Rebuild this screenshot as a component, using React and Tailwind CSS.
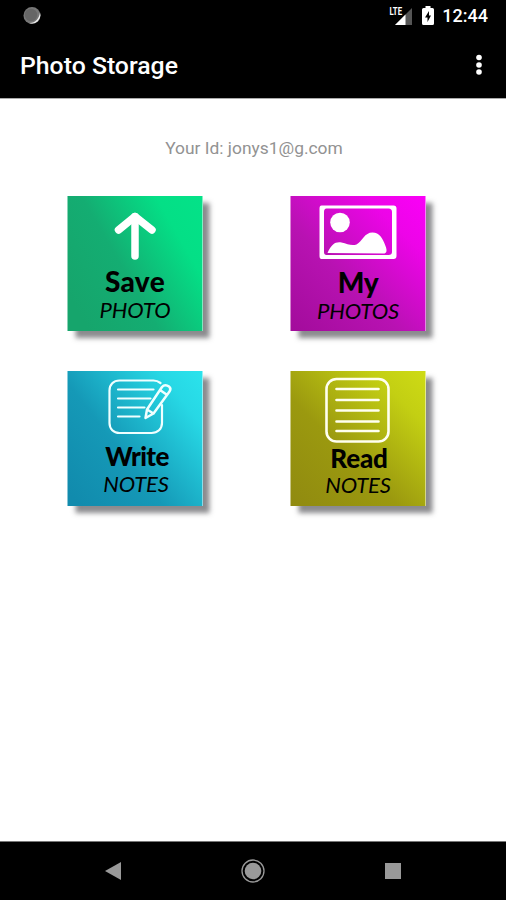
import clsx from "clsx";

function ArrowIcon() {
  return (
    <svg viewBox="0 0 135 72" className="w-full h-[72px] shrink-0" fill="none" stroke="#fff" strokeWidth="7.500" strokeLinecap="round" strokeLinejoin="round">
      <path d="M67.5 60V20.5" />
      <path d="M51 34L67.5 20.5L84.5 34" />
    </svg>
  );
}

function PictureIcon() {
  return (
    <svg viewBox="0 0 135 72" className="w-full h-[72px] shrink-0">
      <path fillRule="evenodd" d="M31 9.500H103Q106 9.500 106 12.500V60Q106 63 103 63H31Q29 63 29 60V12.500Q29 9.500 31 9.500ZM36 12.500Q33.500 12.500 33.500 16V56Q33.500 59 36 59H98Q101.500 59 101.500 56V16Q101.500 12.500 98 12.500Z" fill="#fff" />
      <circle cx="49.500" cy="26.500" r="9.800" fill="#fff" />
      <path d="M37 57C41 48 45 45.500 51 46.500C57 48 61 50 66 48.500C72 45 74 36.500 82 36.500C89 36.500 92 42 95 50C97 55 96 57.500 93 57.500Z" fill="#fff" />
    </svg>
  );
}

function WriteIcon() {
  return (
    <svg viewBox="0 0 135 72" className="w-full h-[72px] shrink-0" fill="none" stroke="#f0ffff" strokeWidth="2.200" strokeLinecap="round" strokeLinejoin="round">
      <path d="M93 12C91 10.500 88.500 9.500 86 9.500H52C46 9.500 42 13.500 42 19.500V52C42 58 46 62 52 62H84C90 62 94.500 58 94.500 52V34" />
      <path d="M50.500 18.500H86M50.500 27.500H83M50.500 36.500H77M50.500 45.500H72" />
      <path d="M78 47L79.500 38.500L94.500 16C96.500 13.500 99.500 14 101.500 15.500C103.500 17 103.300 18.500 102 20.500L86 42.500L78 47ZM79.500 38.500L86 42.500M92.500 19L99 23.500" strokeWidth="2.500" />
    </svg>
  );
}

function ReadIcon() {
  return (
    <svg viewBox="0 0 135 72" className="w-full h-[72px] shrink-0" fill="none" stroke="#fffff0" strokeWidth="2.600" strokeLinecap="round">
      <rect x="36" y="8" width="62" height="62.500" rx="10" />
      <path d="M46 18H88M46 29H88M46 39.500H88M46 50.500H88M46 60H88" />
    </svg>
  );
}

const tiles = [
  {
    icon: ArrowIcon,
    title: "Save",
    subtitle: "PHOTO",
    bg: "bg-[linear-gradient(60deg,#16a56c_10%,#14ad72_43%,#04df86_78%,#04e288_100%)]",
    titleClass: "text-[28px] tracking-[0.3px]",
    subtitleClass: "tracking-[-0.1px]",
  },
  {
    icon: PictureIcon,
    title: "My",
    subtitle: "PHOTOS",
    bg: "bg-[linear-gradient(45deg,#a20c9b_0%,#b812b2_40%,#ed04e8_78%,#fb00f8_100%)]",
    titleClass: "text-[28px] tracking-[-0.3px] translate-y-px",
    subtitleClass: "tracking-[-0.1px] translate-y-px",
  },
  {
    icon: WriteIcon,
    title: "Write",
    subtitle: "NOTES",
    bg: "bg-[linear-gradient(52deg,#118bad_5%,#1599b7_40%,#27d8e5_82%,#2be3ec_100%)]",
    titleClass: "text-[26px] tracking-[-0.6px] translate-x-0.5",
    subtitleClass: "tracking-[-0.1px] translate-x-px -translate-y-px",
  },
  {
    icon: ReadIcon,
    title: "Read",
    subtitle: "NOTES",
    bg: "bg-[linear-gradient(45deg,#908a10_0%,#9b990f_40%,#c3cf13_80%,#cedb15_100%)]",
    titleClass: "text-[26px] tracking-[-0.2px] translate-x-px translate-y-0.5",
    subtitleClass: "tracking-[-0.1px]",
  },
];

function Tile({ icon: Icon, title, subtitle, bg, titleClass, subtitleClass }) {
  return (
    <button
      className={clsx(
        "w-[135px] h-[135px] flex flex-col items-center text-black font-['Lato',sans-serif] shadow-[7px_7px_5px_rgba(60,60,65,0.6)]",
        bg
      )}
    >
      <Icon />
      <span className={clsx("h-[26px] leading-[26px] font-black whitespace-nowrap", titleClass)}>{title}</span>
      <span className={clsx("mt-[3px] h-[26px] leading-[26px] text-[22px] italic whitespace-nowrap", subtitleClass)}>{subtitle}</span>
    </button>
  );
}

function StatusBar() {
  return (
    <div className="h-8 flex items-center pl-[23px] pr-[18px]">
      <svg viewBox="0 0 18 18" className="w-[18px] h-[18px]">
        <circle cx="9" cy="8.500" r="8.500" fill="#777" />
        <path d="M17 5.500A8.500 8.500 0 0 1 6 16C12 16.500 16 12 17 5.500Z" fill="#eee" />
        <circle cx="8" cy="8" r="6.200" fill="#666" />
      </svg>
      <div className="ml-auto flex items-center">
        <svg viewBox="0 0 24 20" className="w-6 h-5 mr-[10px]">
          <path d="M24 2V19H7Z" fill="#555" />
          <path d="M17.500 8.500V19H7Z" fill="#fff" />
          <text x="1.500" y="9" textLength="12.500" lengthAdjust="spacingAndGlyphs" fill="#fff" className="text-[10px] font-bold font-['Roboto',sans-serif]">LTE</text>
        </svg>
        <svg viewBox="0 0 12 19" className="w-3 h-[19px] mr-[8px] -translate-y-px">
          <path d="M3.500 0H8.500V2H10.500Q12 2 12 3.500V17.500Q12 19 10.500 19H1.500Q0 19 0 17.500V3.500Q0 2 1.500 2H3.500Z" fill="#fff" />
          <path d="M7 5L3 11.500H5.500V16L9 9.500H7Z" fill="#000" />
        </svg>
        <span className="text-[18px] leading-8 font-medium">12:44</span>
      </div>
    </div>
  );
}

export default function App() {
  return (
    <div className="w-full h-[900px] flex flex-col bg-white font-['Roboto',sans-serif]">
      <header className="h-[99px] bg-black text-white border-b border-[#aaa]">
        <StatusBar />
        <div className="h-[66px] flex items-center justify-between pl-5 pr-[23px]">
          <h1 className="text-[24.8px] leading-[34px] font-medium translate-y-px">Photo Storage</h1>
          <svg viewBox="0 0 8 22" className="w-2 h-[22px]" fill="#fff">
            <circle cx="4" cy="3.500" r="2.800" />
            <circle cx="4" cy="11" r="2.800" />
            <circle cx="4" cy="18" r="2.800" />
          </svg>
        </div>
      </header>

      <main className="flex-1 flex flex-col items-center">
        <p className="mt-[37px] h-6 leading-6 text-[17.4px] text-[#929292] translate-x-px">Your Id: jonys1@g.com</p>
        <div className="mt-9 w-[358px] -translate-x-[6.5px] grid grid-cols-[135px_135px] justify-between gap-y-10">
          {tiles.map((tile) => (
            <Tile key={tile.title} {...tile} />
          ))}
        </div>
      </main>

      {/* navigation bar */}
      <nav className="h-[59px] bg-black border-t border-[#777] flex items-center justify-between pl-[105px] pr-[105px]">
        <svg viewBox="0 0 16 18" className="w-4 h-[18px]">
          <path d="M16 0V18L0 9Z" fill="#999" />
        </svg>
        <svg viewBox="0 0 24 24" className="w-6 h-6">
          <circle cx="12" cy="12" r="11" fill="none" stroke="#999" strokeWidth="1.300" />
          <circle cx="12" cy="12" r="8.300" fill="#999" />
        </svg>
        <div className="w-4 h-4 bg-[#999]" />
      </nav>
    </div>
  );
}
